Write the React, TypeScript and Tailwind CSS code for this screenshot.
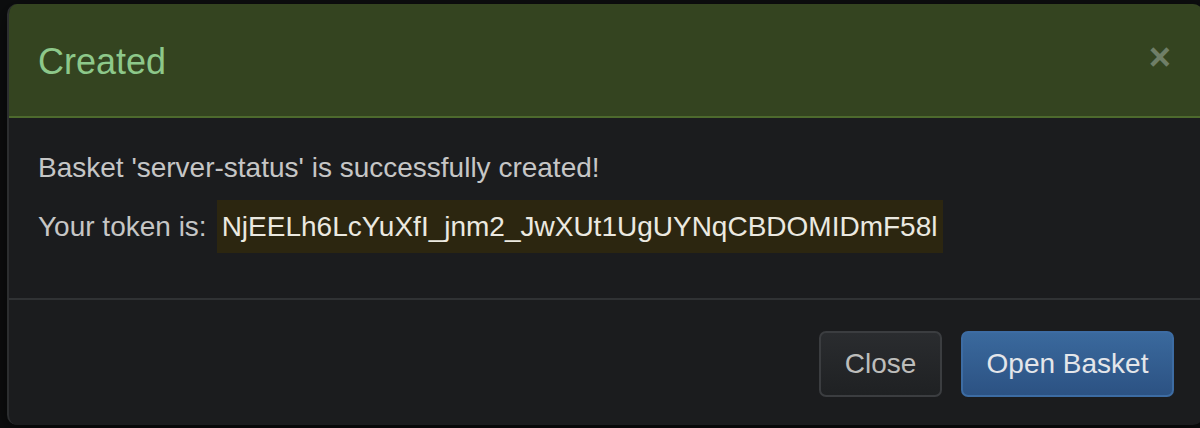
export default function App() {
  return (
    <div className="relative w-[1200px] h-[428px] overflow-hidden bg-[#0d0e0f] font-['Liberation_Sans',Arial,sans-serif]">
      {/* page behind the backdrop */}
      <div className="absolute left-[-6px] top-[-30px] text-[34px] leading-[34px] text-[#5a5b5c]">of Baskets</div>

      {/* modal */}
      <div className="relative ml-[7px] mt-[4px] w-[1196px] rounded-[10px] border-l-2 border-[#2c2e30] bg-[#1b1c1e] shadow-[0_6px_20px_rgba(0,0,0,0.6)] overflow-hidden">
        <div className="flex items-center justify-between h-[114px] pl-[29px] pr-[32px] bg-[#344420] border-b-2 border-[#4d6a2d]">
          <h4 className="mt-[3px] text-[36px] leading-none text-[#8dc88a]">Created</h4>
          <span className="text-[38px] font-bold leading-none text-[#6f7e67] -mt-[6px]">×</span>
        </div>

        <div className="pl-[29px] pr-[30px] pt-[30px] pb-[45px] text-[28px] text-[#c6c6c6]">
          <p className="leading-[40px]">Basket 'server-status' is successfully created!</p>
          <p className="mt-[12px] flex items-center gap-[10px] h-[53px]">
            <span>Your token is:</span>
            <span className="h-[53px] flex items-center pl-[5px] pr-[6px] bg-[#2c2610] text-[#ebe9e0]">NjEELh6LcYuXfI_jnm2_JwXUt1UgUYNqCBDOMIDmF58l</span>
          </p>
        </div>

        <div className="flex justify-end gap-[19px] border-t-2 border-[#303234] pt-[31px] pb-[28px] pr-[29px]">
          <button className="h-[66px] w-[123px] rounded-[7px] border-2 border-[#3b3d40] bg-gradient-to-b from-[#2a2c2f] to-[#1f2123] text-[28px] text-[#bdbdbb]">Close</button>
          <button className="h-[66px] w-[213px] rounded-[7px] border-2 border-[#3d6ca3] bg-gradient-to-b from-[#3a699d] to-[#2c5283] text-[28px] text-[#e4e6ea]">Open Basket</button>
        </div>
      </div>
    </div>
  )
}
